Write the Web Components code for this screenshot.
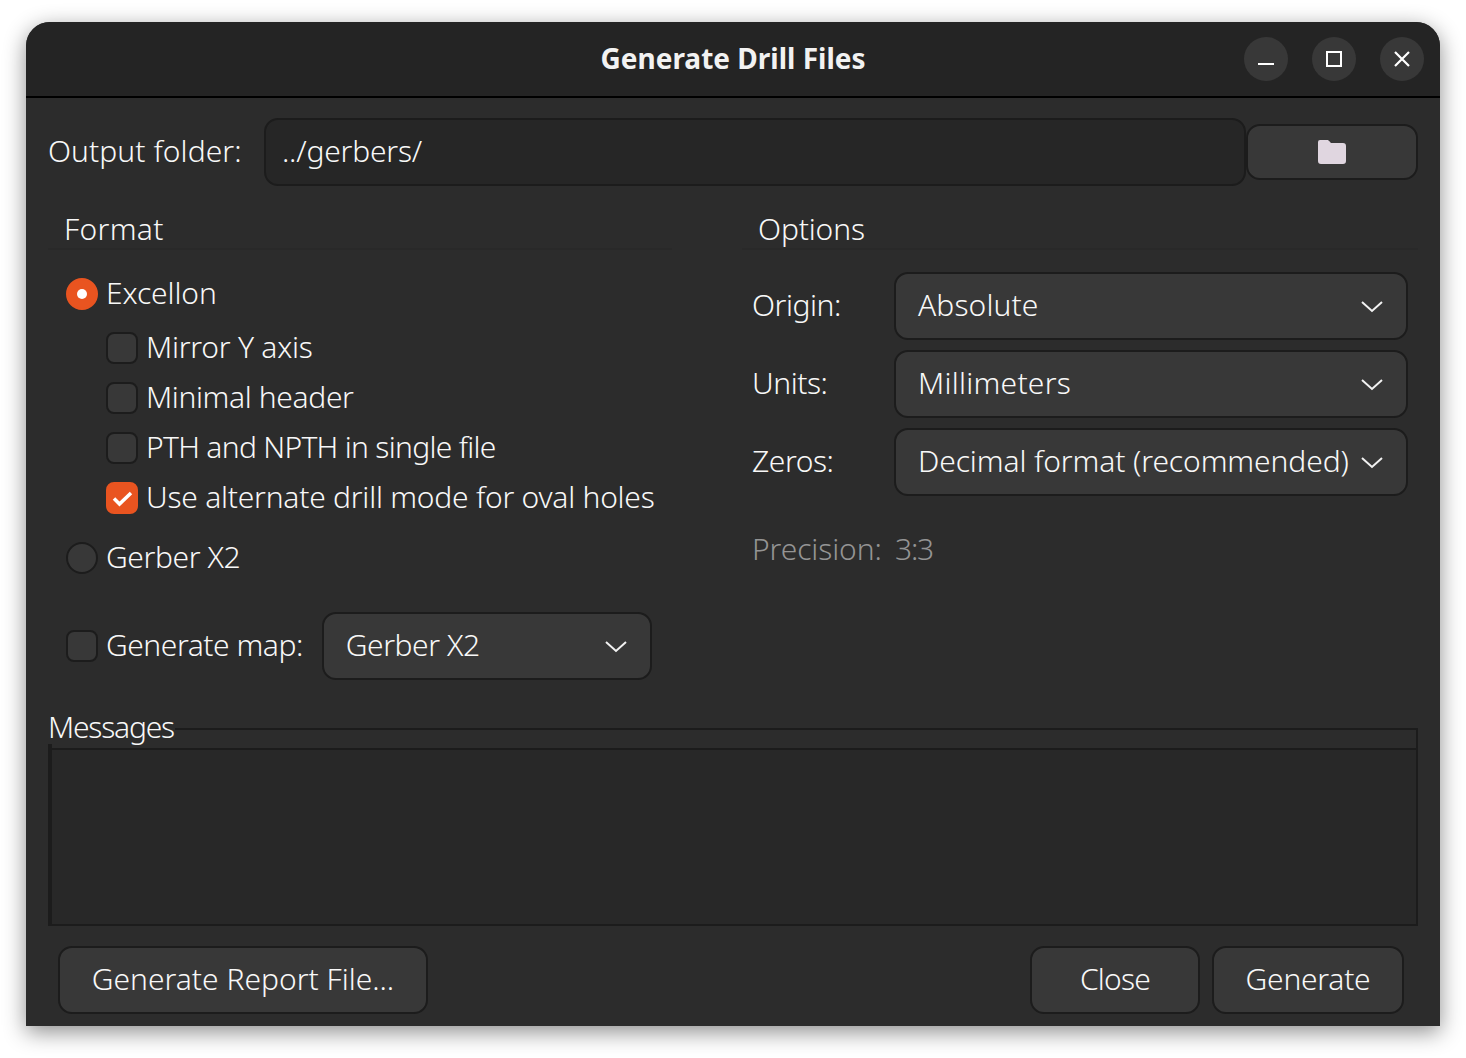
<!DOCTYPE html>
<html>
<head>
<meta charset="utf-8">
<title>Generate Drill Files</title>
<style>
    html, body { margin: 0; height: 100%; background: #fff; }
    body { font-family: "Noto Sans", "Open Sans", sans-serif; font-weight: 300; font-size: 30px; color: #f8f8f8; }
</style>
</head>
<body>

<template id="window-tpl">
    <style>
        :host { display: block; padding: 22px 26px 32px; height: 1058px; box-sizing: border-box; }
        .window {
            height: 1004px;
            background: #2c2c2c;
            border-radius: 24px 24px 0 0;
            box-shadow: 0 6px 22px rgba(0, 0, 0, 0.45);
            display: flex;
            flex-direction: column;
            overflow: hidden;
        }
        .titlebar {
            flex: none;
            height: 74px;
            background: #242424;
            border-bottom: 2px solid #000;
            display: grid;
            grid-template-columns: 1fr auto 1fr;
            align-items: center;
            padding: 0 16px;
        }
        .title { font-weight: 700; font-size: 28px; color: #f2f2f2; grid-column: 2; padding-bottom: 2px; }
        .controls { grid-column: 3; display: flex; justify-content: flex-end; gap: 24px; }
        .ctl { width: 44px; height: 44px; border-radius: 50%; background: #383838; }
        .ctl svg { display: block; width: 44px; height: 44px; }
        .body { flex: 1; display: flex; flex-direction: column; padding: 20px 22px 12px; min-height: 0; }
    </style>
    <div class="window">
        <div class="titlebar">
            <div class="title"><slot name="title"></slot></div>
            <div class="controls">
                <div class="ctl"><svg viewBox="0 0 44 44"><path d="M14 27h16" stroke="#fff" stroke-width="2" fill="none"/></svg></div>
                <div class="ctl"><svg viewBox="0 0 44 44"><rect x="15" y="15" width="14" height="14" stroke="#fff" stroke-width="2" fill="none"/></svg></div>
                <div class="ctl"><svg viewBox="0 0 44 44"><path d="M15 15l14 14M29 15L15 29" stroke="#fff" stroke-width="2.2" fill="none"/></svg></div>
            </div>
        </div>
        <div class="body"><slot></slot></div>
    </div>
</template>

<template id="button-tpl">
    <style>
        :host { display: block; box-sizing: border-box; height: 68px; }
        .btn {
            box-sizing: border-box;
            height: 100%;
            background: #383838;
            border: 2px solid #1c1c1c;
            border-radius: 14px;
            display: flex;
            align-items: center;
            justify-content: center;
            padding: 0 32px 4px;
            white-space: nowrap;
        }
        :host([icon]) .btn { padding-bottom: 0; }
    </style>
    <div class="btn"><slot></slot></div>
</template>

<template id="select-tpl">
    <style>
        :host { display: block; box-sizing: border-box; height: 68px; }
        .sel {
            box-sizing: border-box;
            height: 100%;
            background: #383838;
            border: 2px solid #1c1c1c;
            border-radius: 14px;
            display: flex;
            align-items: center;
            justify-content: space-between;
            padding: 0 22px 0 22px;
            white-space: nowrap;
        }
        span { padding-bottom: 4px; }
        svg { flex: none; width: 24px; height: 24px; }
    </style>
    <div class="sel">
        <span><slot></slot></span>
        <svg viewBox="0 0 24 24"><path d="M2 8l10 9 10-9" stroke="#f2f2f2" stroke-width="2" fill="none"/></svg>
    </div>
</template>

<template id="check-tpl">
    <style>
        :host { display: flex; align-items: center; gap: 8px; height: 50px; white-space: nowrap; }
        .box {
            flex: none;
            box-sizing: border-box;
            width: 32px;
            height: 32px;
            background: #383838;
            border: 2px solid #1c1c1c;
            border-radius: 8px;
        }
        :host([radio]) .box { border-radius: 50%; }
        :host([checked]) .box { background: #e95420; border-color: #e95420; }
        span { padding-bottom: 4px; }
        svg { display: block; width: 28px; height: 28px; }
    </style>
    <div class="box"></div>
    <span><slot></slot></span>
</template>

<drill-window>
    <span slot="title">Generate Drill Files</span>
    <drill-folder-row></drill-folder-row>
    <drill-panels></drill-panels>
    <drill-messages></drill-messages>
    <drill-footer></drill-footer>
</drill-window>

<template id="folder-tpl">
    <style>
        :host { display: flex; align-items: center; height: 68px; flex: none; }
        .label { width: 216px; flex: none; padding-bottom: 4px; letter-spacing: 0.07px; }
        .input {
            box-sizing: border-box;
            width: 982px;
            height: 68px;
            background: #262626;
            border: 2px solid #1c1c1c;
            border-radius: 14px;
            display: flex;
            align-items: center;
            padding: 0 16px 4px;
            letter-spacing: -0.2px;
        }
        drill-button { width: 172px; height: 56px; }
        svg { display: block; width: 30px; height: 26px; }
    </style>
    <span class="label">Output folder:</span>
    <div class="input">../gerbers/</div>
    <drill-button icon><svg viewBox="0 0 30 26"><path d="M3 1h7c1 0 2 .500 3 2l1 1h12a3 3 0 0 1 3 3v15a3 3 0 0 1-3 3H4a3 3 0 0 1-3-3V3a2 2 0 0 1 2-2z" fill="#e0d6e0"/></svg></drill-button>
</template>

<template id="panels-tpl">
    <style>
        :host { display: grid; grid-template-columns: 624px 676px; column-gap: 70px; flex: none; margin-top: 20px; }
        .head { height: 42px; border-bottom: 2px solid #292929; line-height: 46px; padding-left: 16px; margin-bottom: 19px; }
        .right .head { padding-left: 16px; margin-bottom: 22px; letter-spacing: -0.15px; }
        .list { padding-left: 18px; }
        .sub { padding-left: 40px; margin-top: 4px; }
        .map { display: flex; align-items: center; gap: 19px; margin-top: 29px; }
        .map drill-select { width: 330px; }
        .form { display: grid; grid-template-columns: 142px 514px; row-gap: 10px; align-items: center; padding-left: 10px; }
        .form > span { padding-bottom: 4px; letter-spacing: -0.45px; }
        .prec { color: #949494; padding-left: 10px; margin-top: 32px; letter-spacing: -0.1px; }
        .prec span { letter-spacing: -1.3px; margin-left: -2px; }
    </style>
    <div>
        <div class="head" style="letter-spacing:0.33px">Format</div>
        <div class="list">
            <drill-check radio checked id="ex" style="letter-spacing:-0.1px">Excellon</drill-check>
            <div class="sub">
                <drill-check style="letter-spacing:-0.23px">Mirror Y axis</drill-check>
                <drill-check style="letter-spacing:-0.36px">Minimal header</drill-check>
                <drill-check style="letter-spacing:-0.7px">PTH and NPTH in single file</drill-check>
                <drill-check checked id="alt" style="letter-spacing:-0.23px">Use alternate drill mode for oval holes</drill-check>
            </div>
            <drill-check radio style="margin-top:10px;letter-spacing:-0.4px">Gerber X2</drill-check>
            <div class="map">
                <drill-check style="letter-spacing:-0.46px">Generate map:</drill-check>
                <drill-select style="letter-spacing:-0.45px">Gerber X2</drill-select>
            </div>
        </div>
    </div>
    <div class="right">
        <div class="head">Options</div>
        <div class="form">
            <span>Origin:</span><drill-select style="letter-spacing:0.1px">Absolute</drill-select>
            <span>Units:</span><drill-select style="letter-spacing:0.27px">Millimeters</drill-select>
            <span>Zeros:</span><drill-select style="letter-spacing:-0.1px">Decimal format (recommended)</drill-select>
        </div>
        <div class="prec">Precision:&nbsp; <span>3:3</span></div>
    </div>
</template>

<template id="messages-tpl">
    <style>
        :host { display: block; flex: none; margin-top: 28px; position: relative; }
        .label { position: absolute; left: 0; top: 0; background: #2c2c2c; line-height: 38px; padding-right: 1px; height: 36px; letter-spacing: -1.2px; }
        .frame { margin-top: 20px; height: 198px; box-sizing: border-box; border: 2px solid #1c1c1c; border-left-width: 4px; padding-top: 18px; }
        .inner { box-sizing: border-box; height: 100%; background: #282828; border-top: 2px solid #1c1c1c; }
    </style>
    <div class="frame"><div class="inner"></div></div>
    <div class="label">Messages</div>
</template>

<template id="footer-tpl">
    <style>
        :host { display: flex; flex: none; margin-top: 20px; padding: 0 14px 0 10px; gap: 12px; }
        .grow { flex: 1; }
        .a { width: 370px; } .b { width: 170px; letter-spacing: -0.8px; } .c { width: 192px; letter-spacing: -0.25px; }
    </style>
    <drill-button class="a">Generate Report File...</drill-button>
    <div class="grow"></div>
    <drill-button class="b">Close</drill-button>
    <drill-button class="c">Generate</drill-button>
</template>

<script>
    // small helper, every element here is just a template in a shadow root
    function simple(name, tplId) {
        customElements.define(name, class extends HTMLElement {
            constructor() {
                super();
                const shadow = this.attachShadow({ mode: "open" });
                shadow.append(document.getElementById(tplId).content.cloneNode(true));
            }
        });
    }

    class DrillCheck extends HTMLElement {
        constructor() {
            super();
            const shadow = this.attachShadow({ mode: "open" });
            shadow.append(document.getElementById("check-tpl").content.cloneNode(true));
        }

        connectedCallback() {
            if (!this.hasAttribute("checked")) return;
            const box = this.shadowRoot.querySelector(".box");
            // radio gets a dot, checkbox a tick
            box.innerHTML = this.hasAttribute("radio")
                ? `<svg viewBox="0 0 32 32" style="margin:-2px;width:32px;height:32px"><circle cx="16" cy="16" r="5" fill="#fff"/></svg>`
                : `<svg viewBox="0 0 32 32" style="margin:-2px;width:32px;height:32px"><path d="M8 16.500l5.500 5.500L25 11" stroke="#fff" stroke-width="3.500" fill="none"/></svg>`;
        }
    }

    simple("drill-window", "window-tpl");
    simple("drill-button", "button-tpl");
    simple("drill-select", "select-tpl");
    simple("drill-folder-row", "folder-tpl");
    simple("drill-panels", "panels-tpl");
    simple("drill-messages", "messages-tpl");
    simple("drill-footer", "footer-tpl");
    customElements.define("drill-check", DrillCheck);
</script>
</body>
</html>
